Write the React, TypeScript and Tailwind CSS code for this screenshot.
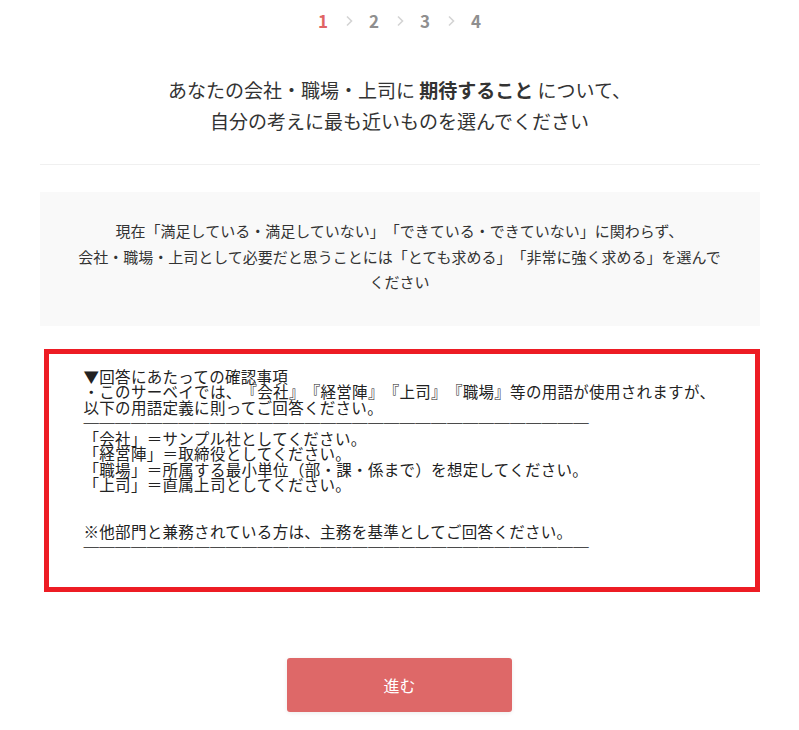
import { Fragment } from 'react'

const STEPS = [1, 2, 3, 4]
const CURRENT_STEP = 1

const DASHES = '─'.repeat(32)

function Chevron() {
  return (
    <svg width="8" height="12" viewBox="0 0 8 12" className="text-[#d4d4d4]">
      <polyline
        points="2,1.5 6.5,6 2,10.5"
        fill="none"
        stroke="currentColor"
        strokeWidth="1.6"
      />
    </svg>
  )
}

function Stepper() {
  return (
    <div className="flex items-center justify-center pt-[11px]">
      {STEPS.map((step, index) => (
        <Fragment key={step}>
          {index > 0 ? (
            <span className="flex w-[25px] justify-center">
              <Chevron />
            </span>
          ) : null}
          <span
            className={
              step === CURRENT_STEP
                ? 'w-[26px] text-center text-[17px] font-bold leading-[20px] text-[#e06464]'
                : 'w-[26px] text-center text-[17px] font-bold leading-[20px] text-[#8f8f8f]'
            }
          >
            {step}
          </span>
        </Fragment>
      ))}
    </div>
  )
}

function App() {
  return (
    <div className="min-h-[730px] bg-white font-['Noto_Sans_CJK_JP','Noto_Sans',sans-serif] text-[#333] [text-spacing-trim:space-all]">
      <div className="mx-auto w-[720px]">
        <Stepper />

        <h1 className="mt-[43px] text-center text-[19px] font-normal leading-[31px] text-[#333]">
          あなたの会社・職場・上司に <strong className="font-bold">期待すること</strong> について、
          <br />
          自分の考えに最も近いものを選んでください
        </h1>

        <hr className="mt-[28px] border-0 border-t border-[#f0f0f0]" />

        <section className="mt-[27px] bg-[#f9f9f9] pb-[31px] pt-[26px] text-center text-[15px] leading-[25.5px] text-[#333]">
          <p className="whitespace-nowrap">
            現在「満足している・満足していない」「できている・できていない」に関わらず、
          </p>
          <p className="whitespace-nowrap">
            会社・職場・上司として必要だと思うことには「とても求める」「非常に強く求める」を選んで
          </p>
          <p>ください</p>
        </section>

        <section className="ml-[4px] mt-[23px] border-[5px] border-[#ed1c24] pb-[32px] pl-[35px] pt-[15px] text-[15.5px] leading-[15.5px] tracking-[0.3px] text-[#222]">
          <p>▼回答にあたっての確認事項</p>
          <p>・このサーベイでは、『会社』『経営陣』『上司』『職場』等の用語が使用されますが、</p>
          <p>以下の用語定義に則ってご回答ください。</p>
          <p className="whitespace-nowrap">{DASHES}</p>
          <p>「会社」＝サンプル社としてください。</p>
          <p>「経営陣」＝取締役としてください。</p>
          <p>「職場」＝所属する最小単位（部・課・係まで）を想定してください。</p>
          <p>「上司」＝直属上司としてください。</p>
          <p>&nbsp;</p>
          <p>&nbsp;</p>
          <p>※他部門と兼務されている方は、主務を基準としてご回答ください。</p>
          <p className="whitespace-nowrap">{DASHES}</p>
        </section>

        <div className="mt-[66px] flex justify-center pb-[18px]">
          <button
            type="button"
            className="h-[54px] w-[225px] rounded-[3px] bg-[#de6868] text-[16px] text-white shadow-[0_1px_4px_rgba(0,0,0,0.08)]"
          >
            進む
          </button>
        </div>
      </div>
    </div>
  )
}

export default App
